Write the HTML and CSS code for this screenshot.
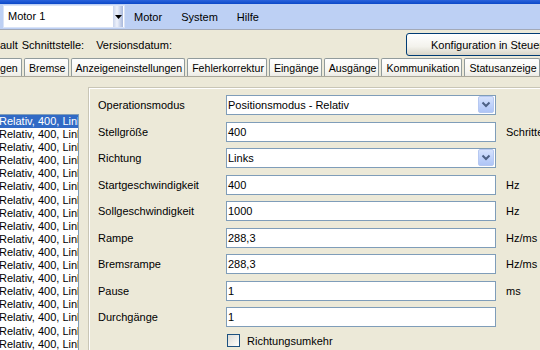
FILE: index.html
```html
<!DOCTYPE html>
<html lang="de">
<head>
<meta charset="utf-8">
<title>Motorsteuerung</title>
<link rel="stylesheet" href="styles.css">
</head>
<body>
<div class="app">
  <div class="titlebar"></div>
  <div class="menubar">
    <div class="combo">
      <span class="combo-text">Motor 1</span>
      <span class="combo-btn"><svg width="7" height="4" viewBox="0 0 7 4"><path d="M0 0 H7 L3.5 4 Z" fill="#000"/></svg></span>
    </div>
    <nav class="menu">
      <span>Motor</span>
      <span>System</span>
      <span>Hilfe</span>
    </nav>
  </div>
  <div class="toolbar">
    <span class="tb-label">ault</span>
    <span class="tb-label">Schnittstelle:</span>
    <span class="tb-label tb-wide">Versionsdatum:</span>
    <button class="tb-button">Konfiguration in Steuerung</button>
  </div>
  <div class="tabs">
    <div class="tab tab-first">gen</div>
    <div class="tab">Bremse</div>
    <div class="tab">Anzeigeneinstellungen</div>
    <div class="tab">Fehlerkorrektur</div>
    <div class="tab">Eingänge</div>
    <div class="tab">Ausgänge</div>
    <div class="tab">Kommunikation</div>
    <div class="tab">Statusanzeige</div>
  </div>
  <div class="main">
    <div class="list-wrap">
      <ul class="list">
        <li class="selected">Relativ, 400, Links</li>
        <li>Relativ, 400, Links</li>
        <li>Relativ, 400, Links</li>
        <li>Relativ, 400, Links</li>
        <li>Relativ, 400, Links</li>
        <li>Relativ, 400, Links</li>
        <li>Relativ, 400, Links</li>
        <li>Relativ, 400, Links</li>
        <li>Relativ, 400, Links</li>
        <li>Relativ, 400, Links</li>
        <li>Relativ, 400, Links</li>
        <li>Relativ, 400, Links</li>
        <li>Relativ, 400, Links</li>
        <li>Relativ, 400, Links</li>
        <li>Relativ, 400, Links</li>
        <li>Relativ, 400, Links</li>
        <li>Relativ, 400, Links</li>
        <li>Relativ, 400, Links</li>
      </ul>
    </div>
    <div class="panel">
      <div class="form">
        <span class="label">Operationsmodus</span>
        <div class="field select"><span class="field-text">Positionsmodus - Relativ</span><span class="select-btn"><svg width="10" height="7" viewBox="0 0 10 7"><path d="M1.5 1.5 L5 5 L8.5 1.5" fill="none" stroke="#4d6185" stroke-width="2"/></svg></span></div>
        <span class="unit"></span>

        <span class="label">Stellgröße</span>
        <div class="field"><span class="field-text">400</span></div>
        <span class="unit">Schritte</span>

        <span class="label">Richtung</span>
        <div class="field select"><span class="field-text">Links</span><span class="select-btn"><svg width="10" height="7" viewBox="0 0 10 7"><path d="M1.5 1.5 L5 5 L8.5 1.5" fill="none" stroke="#4d6185" stroke-width="2"/></svg></span></div>
        <span class="unit"></span>

        <span class="label">Startgeschwindigkeit</span>
        <div class="field"><span class="field-text">400</span></div>
        <span class="unit">Hz</span>

        <span class="label">Sollgeschwindigkeit</span>
        <div class="field"><span class="field-text">1000</span></div>
        <span class="unit">Hz</span>

        <span class="label">Rampe</span>
        <div class="field"><span class="field-text">288,3</span></div>
        <span class="unit">Hz/ms</span>

        <span class="label">Bremsrampe</span>
        <div class="field"><span class="field-text">288,3</span></div>
        <span class="unit">Hz/ms</span>

        <span class="label">Pause</span>
        <div class="field"><span class="field-text">1</span></div>
        <span class="unit">ms</span>

        <span class="label">Durchgänge</span>
        <div class="field"><span class="field-text">1</span></div>
        <span class="unit"></span>

        <span class="label"></span>
        <label class="check-row"><span class="checkbox"></span><span>Richtungsumkehr</span></label>
        <span class="unit"></span>
      </div>
    </div>
  </div>
</div>
</body>
</html>
```
FILE: styles.css
```css
html, body {
  margin: 0;
  padding: 0;
}
body {
  width: 540px;
  height: 350px;
  overflow: hidden;
  background: #ece9d8;
  font-family: "Liberation Sans", Arial, sans-serif;
  font-size: 11px;
  color: #000;
}
.app {
  width: 576px;
  height: 350px;
  overflow: hidden;
}
.titlebar {
  height: 4px;
  background: linear-gradient(#2a63dc, #0b48c8);
}
.menubar {
  height: 25px;
  background: #bdd0f4;
  border-bottom: 1px solid #a3a9b7;
  display: flex;
  align-items: center;
}
.combo {
  margin-left: 3px;
  width: 122px;
  height: 23px;
  background: #fff;
  display: flex;
  align-items: stretch;
  box-sizing: border-box;
  border: 1px solid #d9e3f7;
}
.combo-text {
  flex: 1;
  line-height: 21px;
  padding-left: 4px;
}
.combo-btn {
  width: 10px;
  margin: 0 1px 0 0;
  background: linear-gradient(90deg, #c9d4ec, #eef2fb 40%, #a8b8dc);
  display: flex;
  align-items: center;
  justify-content: center;
}
.menu {
  display: flex;
  gap: 19px;
  margin-left: 9px;
}
.toolbar {
  height: 27px;
  box-sizing: border-box;
  padding-top: 2px;
  display: flex;
  align-items: center;
}
.tb-label {
  margin-right: 4px;
}
.tb-wide {
  margin-left: 8px;
}
.tb-button {
  flex-shrink: 0;
  margin-left: auto;
  margin-right: 4px;
  width: 166px;
  height: 23px;
  box-sizing: border-box;
  border: 1px solid #003c74;
  border-radius: 3px;
  background: linear-gradient(#ffffff, #f3f2ec 60%, #d8d5c8);
  font-family: inherit;
  font-size: 11px;
  text-align: left;
  white-space: nowrap;
  padding: 0 0 0 24px;
  color: #000;
}
.tabs {
  height: 19px;
  display: flex;
  align-items: flex-end;
  gap: 2px;
  border-bottom: 1px solid #aaa79a;
}
.tab {
  flex-shrink: 0;
  height: 18px;
  box-sizing: border-box;
  padding: 3px 2px 0 4px;
  border: 1px solid #919b9c;
  border-bottom: none;
  border-radius: 2px 2px 0 0;
  background: linear-gradient(#fefefe, #f7f6f1 70%, #ecebe5);
  font-size: 10.6px;
  white-space: nowrap;
}
.tab-first {
  padding-left: 0;
  border-left: none;
  border-radius: 0 2px 0 0;
  width: 22px;
}
.main {
  display: flex;
  align-items: flex-start;
}
.list-wrap {
  margin-top: 37px;
  width: 78px;
  border-top: 1px solid #7f9db9;
  border-right: 1px solid #7f9db9;
  background: #fff;
  overflow: hidden;
}
.list {
  list-style: none;
  margin: 0;
  padding: 0;
}
.list li {
  height: 13.1px;
  line-height: 13px;
  white-space: nowrap;
  text-indent: -1px;
}
.list li.selected {
  background: #316ac5;
  color: #fff;
}
.panel {
  margin-top: 10px;
  margin-left: 9px;
  flex: 1;
  height: 265px;
  border-top: 1px solid #c9c6b6;
  border-left: 1px solid #c9c6b6;
  box-shadow: inset 1px 1px 0 #fff;
  padding: 7px 0 0 9px;
}
.form {
  display: grid;
  grid-template-columns: 128px 270px auto;
  grid-auto-rows: 20px;
  row-gap: 6.5px;
  align-items: center;
}
.field {
  height: 20px;
  box-sizing: border-box;
  border: 1px solid #7f9db9;
  background: #fff;
  display: flex;
  align-items: center;
}
.field-text {
  flex: 1;
  padding-left: 1px;
  white-space: nowrap;
}
.select-btn {
  align-self: flex-start;
  width: 16px;
  height: 17px;
  margin-right: 1px;
  box-sizing: border-box;
  border: 1px solid #b6c8f1;
  border-radius: 2px;
  background: linear-gradient(#d6e2fc, #c1d3fb 50%, #afc5f6);
  display: flex;
  align-items: center;
  justify-content: center;
}
.unit {
  padding-left: 10px;
  white-space: nowrap;
}
.check-row {
  align-self: start;
  margin-top: 0.5px;
  display: flex;
  align-items: center;
  gap: 7px;
  padding-left: 1px;
  height: 13px;
}
.checkbox {
  width: 13px;
  height: 13px;
  box-sizing: border-box;
  border: 1px solid #1c5180;
  background: linear-gradient(135deg, #dcdcd7, #f4f4f1 70%, #fff);
}
```
